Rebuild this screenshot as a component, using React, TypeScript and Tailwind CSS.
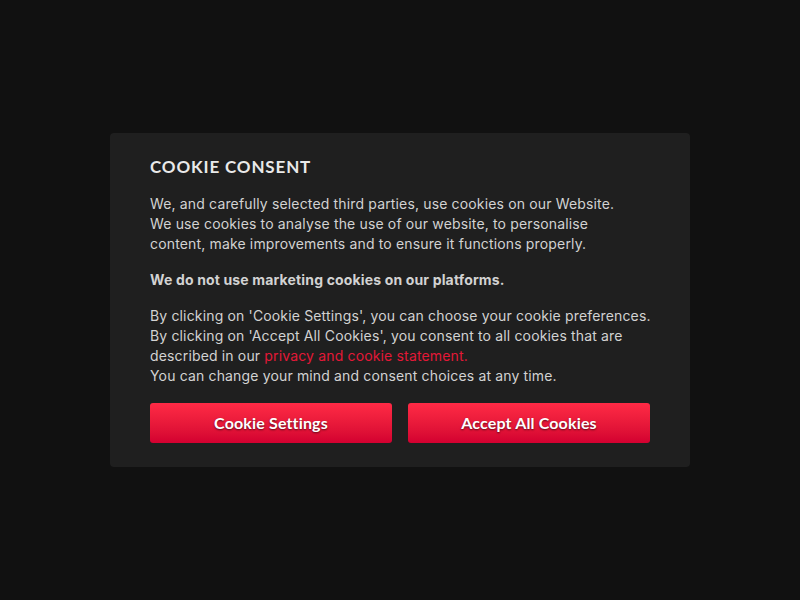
const App = () => {
  return (
    <div className="min-h-screen w-full bg-[#111111] flex items-center justify-center">
      <div className="w-[580px] rounded bg-[#1f1f1f] px-10 pt-6 pb-6 font-['Inter','Liberation_Sans',sans-serif] text-[14px] leading-5 tracking-[0.011em] text-[#d2d2d2]">
        <h2 className="font-['Lato',sans-serif] text-[17px] leading-5 font-bold tracking-[0.05em] text-[#e9e9e9] mb-[17px]">
          COOKIE CONSENT
        </h2>
        <p className="mb-4 whitespace-nowrap">
          We, and carefully selected third parties, use cookies on our Website.
          <br />
          We use cookies to analyse the use of our website, to personalise
          <br />
          content, make improvements and to ensure it functions properly.
        </p>
        <p className="mb-4 font-bold">We do not use marketing cookies on our platforms.</p>
        <p className="whitespace-nowrap">
          By clicking on 'Cookie Settings', you can choose your cookie preferences.
          <br />
          By clicking on 'Accept All Cookies', you consent to all cookies that are
          <br />
          described in our{" "}
          <a href="#privacy" className="text-[#e31837]">
            privacy and cookie statement.
          </a>
          <br />
          You can change your mind and consent choices at any time.
        </p>
        <div className="mt-[17px] grid grid-cols-2 gap-4">
          <button className="h-10 rounded-[3px] bg-gradient-to-b from-[#ff2a45] to-[#d30030] font-['Lato',sans-serif] text-[16px] font-bold text-white [text-shadow:0_1px_2px_rgba(0,0,0,0.6)]">
            Cookie Settings
          </button>
          <button className="h-10 rounded-[3px] bg-gradient-to-b from-[#ff2a45] to-[#d30030] font-['Lato',sans-serif] text-[16px] font-bold text-white [text-shadow:0_1px_2px_rgba(0,0,0,0.6)]">
            Accept All Cookies
          </button>
        </div>
      </div>
    </div>
  );
};

export default App;
